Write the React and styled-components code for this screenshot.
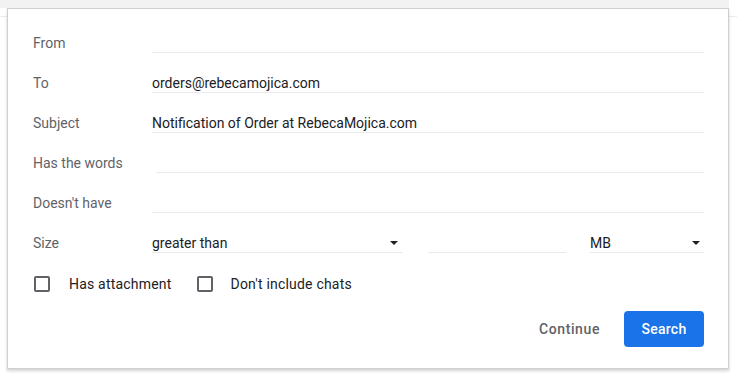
import React from "react";
import styled, { createGlobalStyle } from "styled-components";

const Global = createGlobalStyle`
  html, body { margin: 0; padding: 0; background: #fff; }
  body { font-family: Roboto, "Liberation Sans", Arial, sans-serif; }
  * { box-sizing: border-box; }
`;

const Page = styled.div`
  position: relative;
  width: 737px;
  height: 378px;
  overflow: hidden;
  background: #fff;
`;

const TopStrip = styled.div`
  width: 729px;
  height: 8px;
  background: #f2f2f2;
`;

const BgLine = styled.div`
  height: 9px;
  border-bottom: 1px solid #ececec;
`;

const Dialog = styled.div`
  position: absolute;
  left: 7px;
  top: 8px;
  width: 722px;
  background: #fff;
  border: 1px solid #cfcfcf;
  box-shadow: 0 2px 3px rgba(0, 0, 0, 0.18);
  padding: 4px 24px 21px 25px;
  display: flex;
  flex-direction: column;
`;

const Row = styled.div`
  display: flex;
  align-items: flex-end;
  height: 40px;
`;

const Label = styled.div`
  width: 119px;
  flex: none;
  font-size: 14px;
  line-height: 18px;
  color: #5f6368;
  margin-bottom: 1px;
`;

const Field = styled.input`
  flex: 1;
  min-width: 0;
  height: 19px;
  margin: 0 0 0 ${(p) => p.$indent || 0}px;
  padding: 0;
  border: none;
  border-bottom: 1px solid #e8eaed;
  background: transparent;
  outline: none;
  font-family: Roboto, "Liberation Sans", Arial, sans-serif;
  font-size: 14px;
  line-height: 18px;
  color: #202124;
`;

const SizeField = styled(Field)`
  flex: none;
  width: ${(p) => p.$w}px;
`;

const Select = styled.div`
  display: flex;
  align-items: center;
  justify-content: space-between;
  flex: none;
  width: ${(p) => p.$w}px;
  margin-left: ${(p) => p.$ml || 0}px;
  height: 19px;
  padding-right: ${(p) => p.$pr || 5}px;
  border-bottom: 1px solid #e8eaed;
  font-size: 14px;
  line-height: 18px;
  color: #202124;
`;

const Caret = styled.span`
  width: 0;
  height: 0;
  border-left: 4px solid transparent;
  border-right: 4px solid transparent;
  border-top: 4px solid #202124;
`;

const CheckItem = styled.label`
  display: flex;
  align-items: flex-end;
  margin-left: ${(p) => p.$ml}px;
  font-size: 14px;
  line-height: 18px;
  letter-spacing: 0.2px;
  color: #202124;
`;

const Box = styled.span`
  width: 16px;
  height: 16px;
  border: 2px solid #5f6368;
  border-radius: 2px;
  margin: 0 ${(p) => p.$gap}px 1px 0;
`;

const Actions = styled.div`
  display: flex;
  justify-content: flex-end;
  align-items: center;
  gap: 12px;
  margin-top: 18px;
`;

const Button = styled.button`
  height: 36px;
  border: none;
  border-radius: 4px;
  font-family: Roboto, "Liberation Sans", Arial, sans-serif;
  font-size: 14px;
  font-weight: 500;
  letter-spacing: ${(p) => (p.$primary ? 0.25 : 0.6)}px;
  cursor: pointer;
  padding: 0 ${(p) => (p.$primary ? 17 : 12)}px;
  width: ${(p) => (p.$primary ? "80px" : "auto")};
  background: ${(p) => (p.$primary ? "#1a73e8" : "transparent")};
  color: ${(p) => (p.$primary ? "#fff" : "#5f6368")};
`;

const fields = [
  { label: "From", value: "" },
  { label: "To", value: "orders@rebecamojica.com" },
  { label: "Subject", value: "Notification of Order at RebecaMojica.com" },
  { label: "Has the words", value: "", indent: 4 },
  { label: "Doesn't have", value: "" },
];

export default function App() {
  return (
    <Page>
      <Global />
      <TopStrip />
      <BgLine />
      <Dialog>
        {fields.map((f) => (
          <Row key={f.label}>
            <Label>{f.label}</Label>
            <Field readOnly value={f.value} $indent={f.indent} />
          </Row>
        ))}
        <Row>
          <Label>Size</Label>
          <Select $w={251} $pr={5}>
            greater than
            <Caret />
          </Select>
          <SizeField readOnly value="" $indent={25} $w={138} />
          <Select $w={114} $ml={24} $pr={4}>
            MB
            <Caret />
          </Select>
        </Row>
        <Row>
          <CheckItem $ml={1}>
            <Box $gap={19} />
            Has attachment
          </CheckItem>
          <CheckItem $ml={25}>
            <Box $gap={18} />
            Don't include chats
          </CheckItem>
        </Row>
        <Actions>
          <Button>Continue</Button>
          <Button $primary>Search</Button>
        </Actions>
      </Dialog>
    </Page>
  );
}
